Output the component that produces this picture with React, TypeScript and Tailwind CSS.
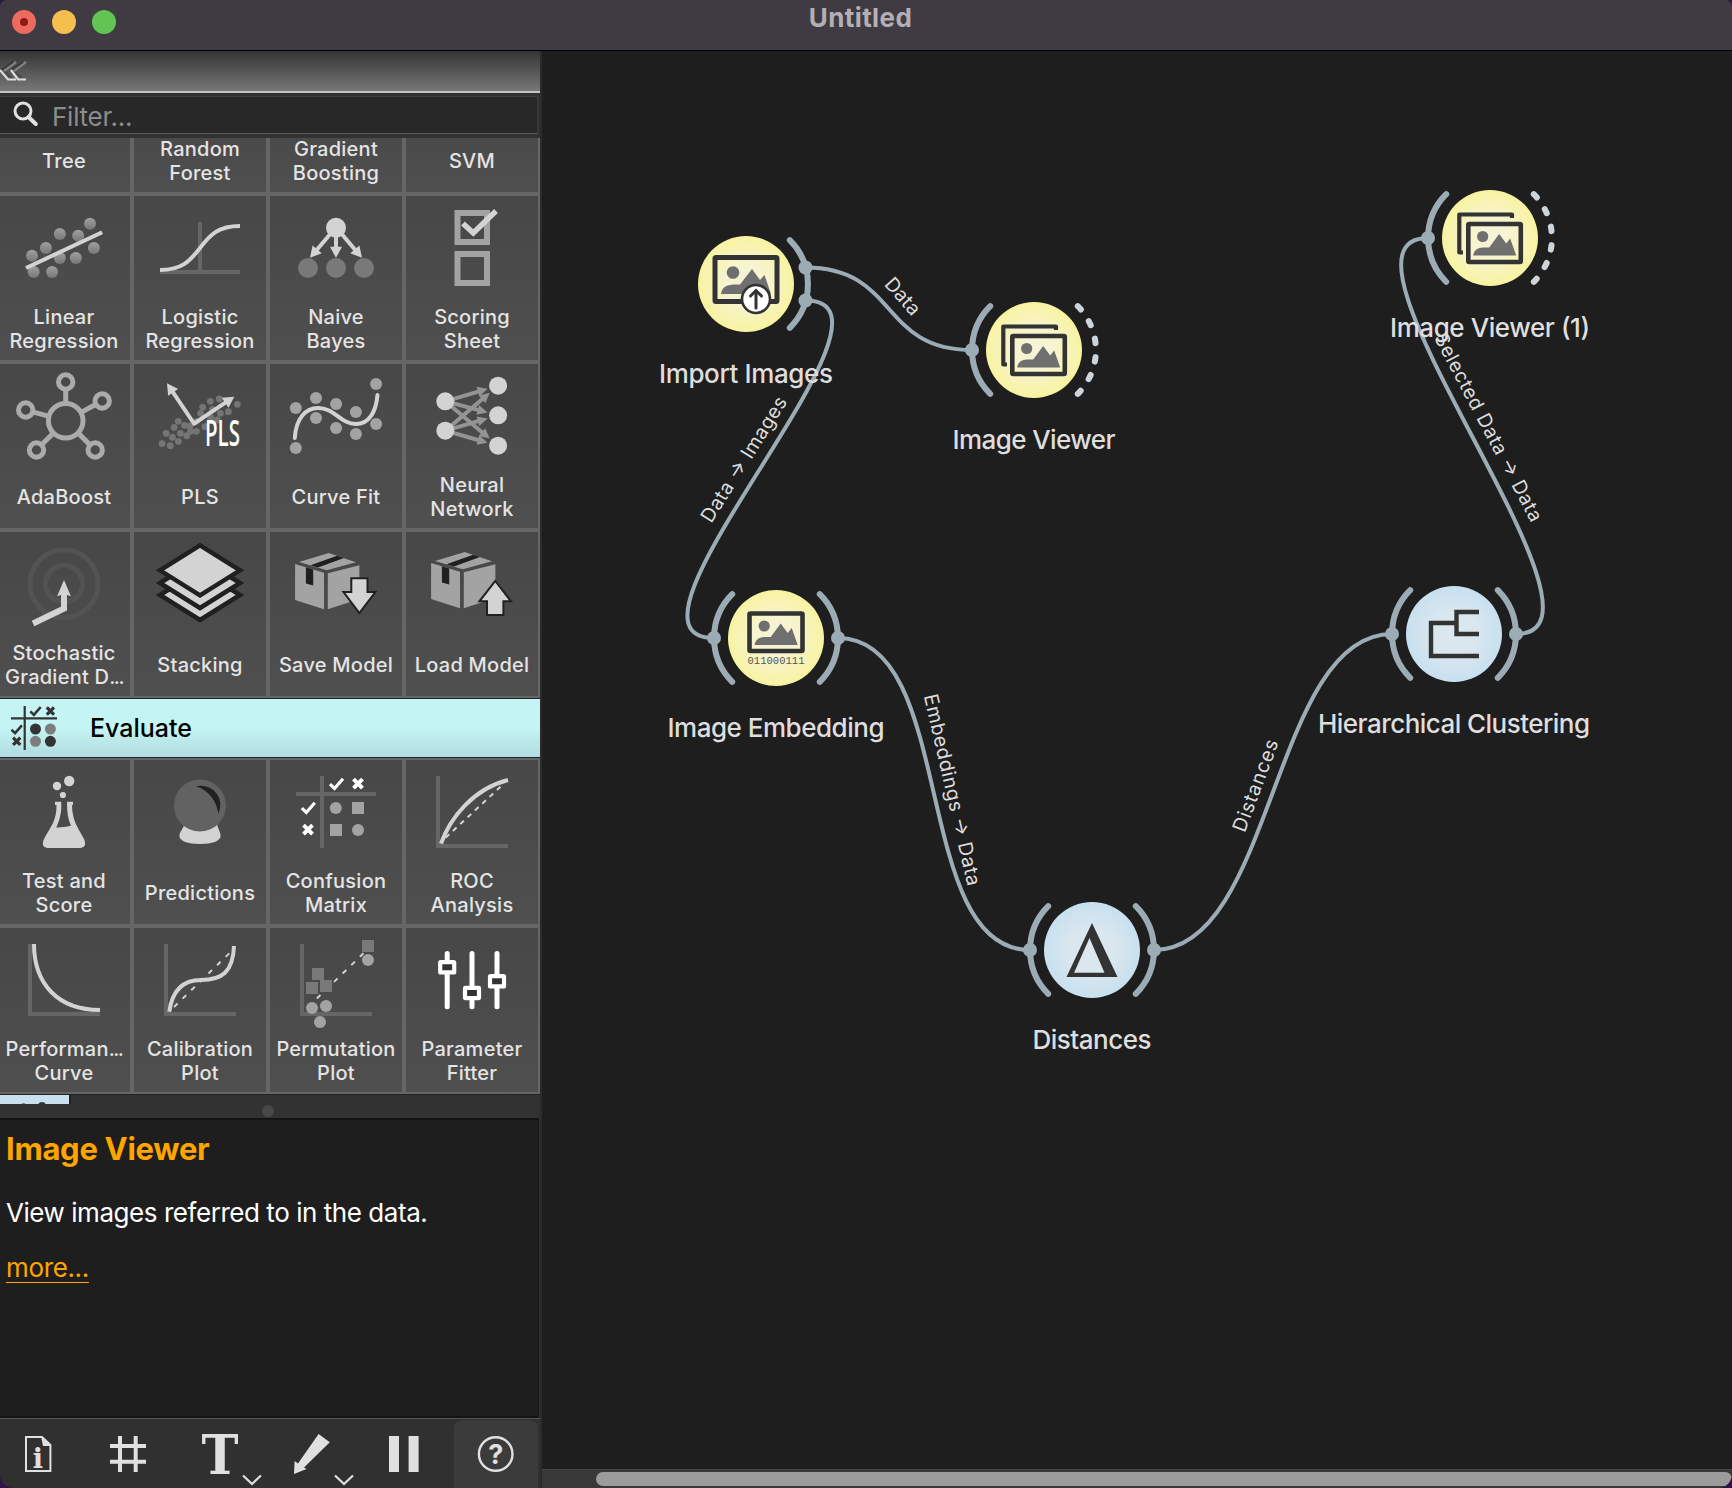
import React from "react";

const LIGHT = "#d3d3d3";
const MID = "#a3a3a3";
const AXIS = "#666666";
const WIRE = "#9cacb5";

type Pt = [number, number];

function Arrow({ from, to, color = LIGHT, width = 4, head = 11, half = 6 }: { from: Pt; to: Pt; color?: string; width?: number; head?: number; half?: number }) {
  const dx = to[0] - from[0];
  const dy = to[1] - from[1];
  const len = Math.hypot(dx, dy);
  const ux = dx / len;
  const uy = dy / len;
  const bx = to[0] - ux * head;
  const by = to[1] - uy * head;
  return (
    <g>
      <line x1={from[0]} y1={from[1]} x2={bx + ux * 2} y2={by + uy * 2} stroke={color} strokeWidth={width} />
      <polygon points={`${to[0]},${to[1]} ${bx - uy * half},${by + ux * half} ${bx + uy * half},${by - ux * half}`} fill={color} />
    </g>
  );
}

function Dots({ pts, r, fill }: { pts: Pt[]; r: number; fill: string }) {
  return (
    <g fill={fill}>
      {pts.map(([x, y], i) => (
        <circle key={i} cx={x} cy={y} r={r} />
      ))}
    </g>
  );
}

function Check({ x, y, s = 1, color = "#fff" }: { x: number; y: number; s?: number; color?: string }) {
  return <path transform={`translate(${x} ${y}) scale(${s})`} d="M-6.5 0.5 L-2 4.8 L6.5 -5" fill="none" stroke={color} strokeWidth="3.2" />;
}

function Cross({ x, y, s = 1, color = "#fff" }: { x: number; y: number; s?: number; color?: string }) {
  return <path transform={`translate(${x} ${y}) scale(${s})`} d="M-4.5 -4.5 L4.5 4.5 M4.5 -4.5 L-4.5 4.5" fill="none" stroke={color} strokeWidth="4" />;
}

const Axes = () => <path d="M30 18 V88 H100" fill="none" stroke={AXIS} strokeWidth="4" />;

const LinearIcon = () => (
  <g>
    <defs>
      <linearGradient id="ball" x1="0" y1="0" x2="0" y2="1">
        <stop offset="0" stopColor="#a0a0a0" />
        <stop offset="1" stopColor="#777" />
      </linearGradient>
    </defs>
    <Dots r={6} fill="url(#ball)" pts={[[90, 29.7], [59.8, 40], [78.2, 41.7], [45.9, 54], [93.9, 54], [32, 61.7], [59.8, 64], [75.8, 64], [33.7, 78], [52.1, 78]]} />
    <line x1="26" y1="74" x2="102.2" y2="38.3" stroke={LIGHT} strokeWidth="4" />
  </g>
);

const LogisticIcon = () => (
  <g fill="none">
    <path d="M64 28 V78 M24 78 H104" stroke={AXIS} strokeWidth="4" />
    <path d="M24 76 C46 76 54 67 64 54 S82 32 104 32" stroke={LIGHT} strokeWidth="4" />
  </g>
);

const BayesIcon = () => (
  <g>
    <Arrow from={[60, 38]} to={[38, 63.8]} />
    <Arrow from={[64, 38]} to={[64, 63.8]} />
    <Arrow from={[68, 38]} to={[90, 63.8]} />
    <circle cx="64" cy="33.8" r="10" fill={LIGHT} />
    <Dots r={10} fill="#797979" pts={[[36, 74], [64, 74], [92, 74]]} />
  </g>
);

const ScoringIcon = () => (
  <g fill="none">
    <rect x="49.5" y="19" width="29.5" height="29" stroke={MID} strokeWidth="6" />
    <rect x="49.5" y="60" width="29.5" height="29" stroke={MID} strokeWidth="6" />
    <path d="M55 29.5 L65.3 39 L88 17" stroke={LIGHT} strokeWidth="5.5" />
  </g>
);

const AdaIcon = () => (
  <g fill="none" stroke="#ababab" strokeWidth="5">
    <circle cx="65.7" cy="58.7" r="17.3" />
    {([[65.7, 20], [102.2, 39], [25.7, 48], [36.5, 88], [95.2, 88]] as Pt[]).map(([x, y], i) => {
      const d = Math.hypot(x - 65.7, y - 58.7);
      const ux = (x - 65.7) / d;
      const uy = (y - 58.7) / d;
      return (
        <g key={i}>
          <circle cx={x} cy={y} r="7.2" />
          <line x1={65.7 + ux * 18} y1={58.7 + uy * 18} x2={x - ux * 8} y2={y - uy * 8} />
        </g>
      );
    })}
  </g>
);

const PlsIcon = () => (
  <g>
    <Dots
      r={3.4}
      fill="#757575"
      pts={[[26, 81.7], [34.3, 83.7], [30.2, 71.3], [36.4, 75.3], [42.3, 79.3], [38.1, 65.3], [42.3, 59.3], [44.4, 71.3], [48.6, 63.3], [50.7, 73.7], [54.5, 69.3], [60.4, 69.3], [64.6, 51.3], [66.7, 45.3], [74.3, 39.3], [83.3, 37], [76.4, 47.3], [84.4, 51.3], [92.4, 49.7], [101.4, 42.3], [74.6, 55.3], [81.3, 58], [69, 64.7], [60.4, 59.3], [54, 64]]}
    />
    <Arrow from={[59, 63]} to={[31, 21.3]} />
    <Arrow from={[57.5, 62]} to={[98.3, 34.7]} />
    <text x="69" y="84" fontSize="36" textLength="35" lengthAdjust="spacingAndGlyphs" fill="#fff" className="font-['Open_Sans'] font-semibold">
      PLS
    </text>
  </g>
);

const CurveIcon = () => (
  <g>
    <Dots r={6} fill={MID} pts={[[23.8, 46], [44, 36], [64.1, 42], [44, 56], [83.9, 50], [64.1, 66], [83.9, 72], [104.1, 62], [104.1, 22], [23.8, 86]]} />
    <path d="M22.8 76 C24 56 34 46 46 46 C63 46 68 62 84 62 C97 62 104 50 105.5 33" fill="none" stroke={LIGHT} strokeWidth="4" strokeLinecap="round" />
  </g>
);

const NeuralIcon = () => {
  const left: Pt[] = [[37.3, 39.3], [37.3, 68.7]];
  const right: Pt[] = [[90.1, 23.7], [90.1, 53.3], [90.1, 83.7]];
  return (
    <g>
      {left.map((a) =>
        right.map((b) => {
          const d = Math.hypot(b[0] - a[0], b[1] - a[1]);
          const to: Pt = [b[0] - ((b[0] - a[0]) / d) * 11, b[1] - ((b[1] - a[1]) / d) * 11];
          return <Arrow key={`${a[1]}-${b[1]}`} from={a} to={to} color="#949494" width={4} head={10} half={5} />;
        })
      )}
      <Dots r={9} fill={LIGHT} pts={[...left, ...right]} />
    </g>
  );
};

const SgdIcon = () => (
  <g fill="none">
    <circle cx="64" cy="53.7" r="34" stroke="#535353" strokeWidth="5" />
    <circle cx="64" cy="53.7" r="18.5" stroke="#535353" strokeWidth="5" />
    <path d="M33 93.5 L64 78.5 V62" stroke={LIGHT} strokeWidth="6" />
    <polygon points="64,50 71,66.5 64,63.5 57,66.5" fill={LIGHT} />
  </g>
);

const StackIcon = () => (
  <g fill={LIGHT} stroke="#202020" strokeWidth="4.5">
    {[65, 53, 40.3].map((cy) => (
      <polygon key={cy} points={`64,${cy - 25} 104,${cy} 64,${cy + 25} 24,${cy}`} />
    ))}
  </g>
);

const Box = () => (
  <g fill={MID}>
    <polygon points="27,32 56.8,23 84,32.3 54.8,40.3" />
    <polygon points="23.1,34 52,42.7 52,79.3 23.1,70" />
    <polygon points="55.8,43.3 87.4,35.3 87.4,69 55.8,79.3" />
    <polygon points="38.5,35.2 65.2,25.7 72,28 46,37.6" fill="#202020" />
    <polygon points="33.9,37.3 41.2,39.5 41.2,55.5 33.9,53.5" fill="#202020" />
  </g>
);

const SaveIcon = () => (
  <g>
    <Box />
    <polygon points="79.3,48.3 95.5,48.3 95.5,62 103.3,62 87.4,83 71.5,62 79.3,62" fill={LIGHT} stroke="#202020" strokeWidth="2" />
  </g>
);

const LoadIcon = () => (
  <g>
    <g transform="translate(0 -1)">
      <Box />
    </g>
    <polygon points="87.3,51 103,71.3 95.4,71.3 95.4,85 79,85 79,71.3 71.4,71.3" fill={LIGHT} stroke="#202020" strokeWidth="2" />
  </g>
);

const FlaskIcon = () => (
  <g fill={LIGHT}>
    <circle cx="69.2" cy="23" r="5.2" />
    <circle cx="57" cy="28" r="4.2" />
    <circle cx="62.9" cy="37" r="3.1" />
    <path d="M55 43.7 H61.2 C61.8 54 60 61 56.3 69.7 C62 69 66 69 71 67.7 C68 61 67 54 67 43.7 H73 V47 H72 C72 62 78 70 83.5 80 C87 86.5 84.5 90 80 90 H48 C43.5 90 41 86.5 44.5 80 C50 70 57 62 56.5 47 H55 Z" />
  </g>
);

const PredictIcon = () => (
  <g>
    <path d="M48.5 66 C47 71 43.4 74 43.4 78 C43.4 83 52 86 64 86 S84.6 83 84.6 78 C84.6 74 82 71 81 66 Z" fill={LIGHT} />
    <circle cx="63.9" cy="47.5" r="26" fill="#626262" />
    <path d="M60 28.3 C70 26 80 31 83.5 41 C85 47 84 52 82.3 55.7 C81 44 73 32 60 28.3 Z" fill="#202020" />
  </g>
);

const ConfusionIcon = () => (
  <g>
    <path d="M50 18 V90 M24 36 H104" stroke={AXIS} strokeWidth="4" />
    <Check x={64.5} y={25.7} />
    <Cross x={86} y={25.7} />
    <Check x={36.3} y={49.7} />
    <Cross x={36} y={71.7} />
    <g fill={MID}>
      <circle cx="63.8" cy="50" r="6" />
      <rect x="80" y="44" width="12" height="12" />
      <rect x="58" y="66" width="12" height="12" />
      <circle cx="86" cy="72" r="6" />
    </g>
  </g>
);

const RocIcon = () => (
  <g fill="none" stroke={LIGHT}>
    <Axes />
    <path d="M33 85.7 C42 60 65 31 100 22" strokeWidth="4" />
    <path d="M37.6 79.7 L93 28.3" strokeWidth="2" strokeDasharray="5 5" />
  </g>
);

const PerfIcon = () => (
  <g fill="none">
    <Axes />
    <path d="M34 18 C34 58 58 84 100 84" stroke={LIGHT} strokeWidth="4" />
  </g>
);

const CalibIcon = () => (
  <g fill="none" stroke={LIGHT}>
    <Axes />
    <path d="M33.3 85.7 C36 66 46 54 65 54 C86 54 97 46 98 20" strokeWidth="4" />
    <path d="M38 81 L96 24.7" strokeWidth="2" strokeDasharray="5 7" />
  </g>
);

const PermIcon = () => (
  <g>
    <Axes />
    <path d="M91.5 27.3 L41 76.3" stroke={LIGHT} strokeWidth="2" strokeDasharray="5 7" />
    <g fill="#797979">
      <rect x="90" y="14" width="12" height="12" />
      <rect x="40" y="42" width="12" height="12" />
      <rect x="34" y="56" width="12" height="12" />
      <rect x="48" y="54" width="12" height="12" />
    </g>
    <Dots r={6} fill={MID} pts={[[96, 34], [40, 82], [54, 80], [48, 96]]} />
  </g>
);

const ParamIcon = () => (
  <g>
    {([[39.2, 41.3], [64, 67], [89, 55.3]] as Pt[]).map(([x, y]) => (
      <g key={x}>
        <line x1={x} x2={x} y1="27.5" y2="80.7" stroke="#fff" strokeWidth="5" strokeLinecap="round" />
        <rect x={x - 7} y={y - 5.1} width="14" height="10.2" rx="0.5" fill="#333" stroke="#fff" strokeWidth="4.2" strokeLinejoin="round" />
      </g>
    ))}
  </g>
);

type Widget = { label: string[]; icon: () => React.ReactElement };

const MODEL: Widget[] = [
  { label: ["Linear", "Regression"], icon: LinearIcon },
  { label: ["Logistic", "Regression"], icon: LogisticIcon },
  { label: ["Naive", "Bayes"], icon: BayesIcon },
  { label: ["Scoring", "Sheet"], icon: ScoringIcon },
  { label: ["AdaBoost"], icon: AdaIcon },
  { label: ["PLS"], icon: PlsIcon },
  { label: ["Curve Fit"], icon: CurveIcon },
  { label: ["Neural", "Network"], icon: NeuralIcon },
  { label: ["Stochastic", "Gradient D..."], icon: SgdIcon },
  { label: ["Stacking"], icon: StackIcon },
  { label: ["Save Model"], icon: SaveIcon },
  { label: ["Load Model"], icon: LoadIcon },
];

const EVALUATE: Widget[] = [
  { label: ["Test and", "Score"], icon: FlaskIcon },
  { label: ["Predictions"], icon: PredictIcon },
  { label: ["Confusion", "Matrix"], icon: ConfusionIcon },
  { label: ["ROC", "Analysis"], icon: RocIcon },
  { label: ["Performan...", "Curve"], icon: PerfIcon },
  { label: ["Calibration", "Plot"], icon: CalibIcon },
  { label: ["Permutation", "Plot"], icon: PermIcon },
  { label: ["Parameter", "Fitter"], icon: ParamIcon },
];

function Label({ lines }: { lines: string[] }) {
  return (
    <div className="flex h-12 shrink-0 flex-col items-center justify-center text-[20px] leading-6 font-medium tracking-[0.25px] whitespace-nowrap text-[#e4e4e4]">
      {lines.map((l) =>
        l.endsWith("...") ? (
          <span key={l}>
            {l.slice(0, -3)}
            <span className="tracking-[-1.5px]">...</span>
          </span>
        ) : (
          <span key={l}>{l}</span>
        )
      )}
    </div>
  );
}

function Grid({ items }: { items: Widget[] }) {
  return (
    <div className="grid grid-cols-[132px_136px_136px_136px]">
      {items.map(({ label, icon: Icon }, i) => (
        <div
          key={i}
          className={`flex h-[168px] flex-col items-center border-2 border-[#666] bg-linear-to-b from-[#474747] to-[#4f4f4f] ${i % 4 === 0 ? "border-l-0 pr-0.5" : ""}`}
        >
          <svg className="h-[109px] w-32 shrink-0" viewBox="0 2 128 109">
            <Icon />
          </svg>
          <Label lines={label} />
        </div>
      ))}
    </div>
  );
}

function Sidebar() {
  return (
    <aside className="flex w-[542px] shrink-0 flex-col border-r-2 border-[#2b2b2b] bg-[#323232]">
      <div className="flex h-[42px] shrink-0 items-center border-b-2 border-[#c4c4c4] bg-linear-to-b from-[#353535] to-[#787878]">
        <svg className="h-5 w-7" viewBox="0 0 28 20" fill="none">
          <path d="M16 1 L4 10 M26 1 L14 10" stroke="#808080" strokeWidth="2.5" />
          <path d="M13 1 L1 9 M23 1 L11 9" stroke="#3a3a3a" strokeWidth="2" />
          <path d="M5 11 L12 17 M15 11 L22 17" stroke="#4a4a4a" strokeWidth="2" />
          <path d="M0 9 L8 18.5 H16 M11 9 L18 18.5 H26" stroke="#dcdcdc" strokeWidth="2.2" />
        </svg>
      </div>
      <div className="mt-[3px] flex h-[38px] w-[538px] shrink-0 items-center border border-l-0 border-t-[#404040] border-r-[#3a3a3a] border-b-[#5a5a5a] bg-[#282828]">
        <svg className="ml-3 h-7 w-7" viewBox="12 101 28 28" fill="none" stroke="#e0e0e0">
          <circle cx="23" cy="111" r="8" strokeWidth="3" />
          <path d="M28.5 117 L35.8 124" strokeWidth="4" strokeLinecap="round" />
        </svg>
        <span className="ml-3 pt-1 text-[26px] leading-8 tracking-[-0.25px] text-[#8c8c8c]">Filter...</span>
      </div>
      <div className="mt-1 flex h-[966px] shrink-0 flex-col overflow-hidden">
        <div className="grid h-14 shrink-0 grid-cols-[132px_136px_136px_136px]">
          {[["Tree"], ["Random", "Forest"], ["Gradient", "Boosting"], ["SVM"]].map((l, i) => (
            <div
              key={i}
              className={`h-14 border-2 border-t-0 border-[#666] bg-linear-to-b from-[#4a4a4a] to-[#4f4f4f] ${i === 0 ? "border-l-0 pr-0.5" : ""}`}
            >
              <div className="-mt-px">
                <Label lines={l} />
              </div>
            </div>
          ))}
        </div>
        <Grid items={MODEL} />
        <div className="flex h-[60px] shrink-0 items-center border-y border-[#222] bg-linear-to-b from-[#c5f4f4] from-50% to-[#b0dcdf]">
          <svg className="h-[58px] w-[90px]" viewBox="0 0 90 58">
            <path d="M24.7 7 V51 M11 19.3 H57" stroke="#333" strokeWidth="2.2" />
            <Check x={35.5} y={12} s={0.8} color="#333" />
            <Cross x={50.4} y={12} s={0.8} color="#333" />
            <Check x={16.7} y={30.3} s={0.8} color="#333" />
            <Cross x={16.7} y={42.3} s={0.8} color="#333" />
            <Dots r={5.5} fill="#333" pts={[[35.5, 30], [50.4, 42.3]]} />
            <Dots r={5.5} fill="#7d7d7d" pts={[[50.4, 30], [35.5, 42.3]]} />
          </svg>
          <span className="text-[25px] leading-8 font-medium text-black">Evaluate</span>
        </div>
        <Grid items={EVALUATE} />
        <div className="flex h-2.5 shrink-0 border-t border-[#222]">
          <svg className="h-[9px] w-[71px] border-r-2 border-[#222] bg-[#c9e1ee]" viewBox="0 0 69 9">
            <circle cx="42" cy="11" r="4" fill="#333" />
            <circle cx="23.5" cy="10.5" r="2.5" fill="#777" />
          </svg>
        </div>
      </div>
      <div className="flex h-3.5 shrink-0 justify-center pr-1">
        <div className="mt-[1px] size-3 rounded-full bg-[#484848]" />
      </div>
      <div className="flex h-[300px] w-[539px] shrink-0 flex-col items-start border-t-2 border-r border-b-2 border-[#141414] bg-[#1e1e1e] pl-1.5">
        <h1 className="mt-[9px] text-[31px] leading-10 font-bold tracking-[-0.3px] text-[#ffa500]">Image Viewer</h1>
        <p className="mt-7 text-[26px] leading-8 tracking-[-0.45px] text-white">View images referred to in the data.</p>
        <a className="mt-[25px] border-b border-[#ffa500] text-[26px] leading-[28px] tracking-[-0.35px] text-[#ffa500]">more...</a>
      </div>
      <div className="flex h-[70px] shrink-0 border-t border-[#555] bg-[#303030]">
        <svg className="h-[69px] w-[454px]" viewBox="0 1 454 69" fill="#e0e0e0">
          <path d="M26 19 H42 L50.4 27 V53 H26 Z" fill="none" stroke="#e0e0e0" strokeWidth="2" />
          <path d="M41 18 L51.4 28 H43 Z" />
          <text x="38" y="49.5" textAnchor="middle" fontSize="27" className="font-['DejaVu_Serif'] font-bold">
            i
          </text>
          <path d="M120 18 V54 M135.7 18 V54 M110 28 H146 M110 43.7 H146" stroke="#e0e0e0" strokeWidth="4" />
          <text x="220" y="56" textAnchor="middle" fontSize="55" textLength="37" lengthAdjust="spacingAndGlyphs" className="font-['DejaVu_Serif'] font-bold">
            T
          </text>
          <path d="M243 57.5 L252 66 L261 57.5 M335 57.5 L344 66 L353 57.5" fill="none" stroke="#e0e0e0" strokeWidth="2.2" />
          <polygon points="318.6,16 329.8,24.3 304,49.5 306.6,51 294,56 294.6,43 298,45.5" />
          <rect x="389" y="18" width="10" height="36" />
          <rect x="408.6" y="18" width="10" height="36" />
        </svg>
        <div className="mt-px flex h-[68px] w-[84px] rounded-t-lg bg-[#3b3b3b]">
          <svg className="h-[68px] w-[84px]" viewBox="454 2 84 68">
            <circle cx="495.7" cy="36" r="16.8" fill="none" stroke="#e0e0e0" strokeWidth="2.4" />
            <text x="495.7" y="45.5" textAnchor="middle" fontSize="27" fill="#e0e0e0" className="font-['Inter'] font-bold">
              ?
            </text>
          </svg>
        </div>
      </div>
    </aside>
  );
}

/* Workflow canvas, drawn in window coordinates. */

const LINKS: { a: Pt; b: Pt; text: string; len: number }[] = [
  { a: [805.5, 267.5], b: [972, 350], text: "Data", len: 43 },
  { a: [805.5, 300.5], b: [714, 638], text: "Data → Images", len: 144 },
  { a: [838, 638], b: [1030, 950], text: "Embeddings → Data", len: 196 },
  { a: [1154, 950], b: [1392, 634], text: "Distances", len: 97 },
  { a: [1516, 634], b: [1428, 238], text: "Selected Data → Data", len: 210 },
];

function Link({ a, b, text, len }: { a: Pt; b: Pt; text: string; len: number }) {
  const off = Math.min(Math.hypot(a[0] - b[0], a[1] - b[1]) / 2, 120);
  const mx = (a[0] + b[0]) / 2;
  const my = (a[1] + b[1]) / 2;
  let dx = 2 * (b[0] - a[0]) - 2 * off;
  let dy = 2 * (b[1] - a[1]);
  if (dx < 0) {
    dx = -dx;
    dy = -dy;
  }
  const angle = (Math.atan2(dy, dx) * 180) / Math.PI;
  return (
    <g>
      <path d={`M${a[0]} ${a[1]} C${a[0] + off} ${a[1]} ${b[0] - off} ${b[1]} ${b[0]} ${b[1]}`} fill="none" stroke={WIRE} strokeWidth="4" />
      <text transform={`translate(${mx} ${my}) rotate(${angle})`} y="-12" textAnchor="middle" fontSize="19.5" textLength={len} fill="#dcdcdc">
        {text}
      </text>
    </g>
  );
}

const Photo = () => (
  <g>
    <circle cx="-7.5" cy="-8.5" r="5.6" />
    <path d="M-17 10.5 C-16 3 -10 2 -1 2.5 L9 -11 L16 -1.5 L20 -6.5 L26 10.5 Z" />
  </g>
);

const ImportGlyph = () => (
  <g>
    <rect x="-31" y="-26.5" width="62" height="44" rx="1" fill="none" stroke="#333" strokeWidth="5" />
    <g fill="#6f6f6f">
      <circle cx="-13" cy="-11.5" r="6.3" />
      <path d="M-25 10 C-24 2 -18 0 -6 0.5 L6 -15 L14 -4 L18.5 -9 L25 10 Z" />
    </g>
    <circle cx="10" cy="15" r="14" fill="#fff" stroke="#333" strokeWidth="2.6" />
    <path d="M10 24 V7 M4.5 12 L10 6.5 L15.5 12" fill="none" stroke="#333" strokeWidth="3" strokeLinecap="round" />
  </g>
);

const ViewerGlyph = () => (
  <g>
    <path d="M-27 14.5 H-30.7 V-23.5 H22 V-20" fill="none" stroke="#333" strokeWidth="4.2" strokeLinejoin="round" />
    <rect x="-21.7" y="-14" width="52.5" height="38" rx="1" fill="none" stroke="#333" strokeWidth="4.6" />
    <g fill="#6f6f6f" transform="translate(0.2 7)">
      <Photo />
    </g>
  </g>
);

const EmbedGlyph = () => (
  <g>
    <rect x="-26.5" y="-24.5" width="53" height="37.5" rx="1" fill="none" stroke="#333" strokeWidth="4.6" />
    <g fill="#6f6f6f" transform="translate(-4.3 -3.5)">
      <Photo />
    </g>
    <text x="0" y="26" textAnchor="middle" fontSize="11.5" textLength="57" lengthAdjust="spacingAndGlyphs" fill="#555" className="font-['Liberation_Mono']">
      011000111
    </text>
  </g>
);

const ClusterGlyph = () => (
  <path d="M25 -22 H2.5 V0 H25 M2.5 -11 H-23 V22 H25" fill="none" stroke="#333" strokeWidth="4.4" />
);

const DeltaGlyph = () => <path fillRule="evenodd" fill="#333" d="M0 -27 L25.5 27 H-25.5 Z M-2.5 -12 L-18 22.7 H12.5 Z" />;

type Port = "solid" | "dashed" | "none";
const NODES: { x: number; y: number; label: string; w: number; tone: string; left: Port; right: Port; ports: Pt[]; glyph: () => React.ReactElement }[] = [
  { x: 746, y: 284, label: "Import Images", w: 174, tone: "url(#yellow)", left: "none", right: "solid", ports: [[59.5, -16.5], [59.5, 16.5]], glyph: ImportGlyph },
  { x: 1034, y: 350, label: "Image Viewer", w: 163, tone: "url(#yellow)", left: "solid", right: "dashed", ports: [[-62, 0]], glyph: ViewerGlyph },
  { x: 776, y: 638, label: "Image Embedding", w: 217, tone: "url(#yellow)", left: "solid", right: "solid", ports: [[-62, 0], [62, 0]], glyph: EmbedGlyph },
  { x: 1490, y: 238, label: "Image Viewer (1)", w: 200, tone: "url(#yellow)", left: "solid", right: "dashed", ports: [[-62, 0]], glyph: ViewerGlyph },
  { x: 1454, y: 634, label: "Hierarchical Clustering", w: 272, tone: "url(#blue)", left: "solid", right: "solid", ports: [[-62, 0], [62, 0]], glyph: ClusterGlyph },
  { x: 1092, y: 950, label: "Distances", w: 119, tone: "url(#blue)", left: "solid", right: "solid", ports: [[-62, 0], [62, 0]], glyph: DeltaGlyph },
];

function Canvas() {
  return (
    <main className="flex min-w-0 flex-1 flex-col bg-[#1e1e1e]">
      <svg className="h-[1418px] w-[1190px] shrink-0" viewBox="542 51 1190 1418">
        <defs>
          <radialGradient id="yellow">
            <stop offset="0" stopColor="#f6f3d8" />
            <stop offset="0.45" stopColor="#f7f4cf" />
            <stop offset="1" stopColor="#f8f3a0" />
          </radialGradient>
          <radialGradient id="blue">
            <stop offset="0" stopColor="#dde8ef" />
            <stop offset="0.45" stopColor="#dae7ef" />
            <stop offset="1" stopColor="#c8e0ef" />
          </radialGradient>
        </defs>
        {LINKS.map((l) => (
          <Link key={l.text} {...l} />
        ))}
        {NODES.map(({ x, y, label, w, tone, left, right, ports, glyph: Glyph }) => (
          <g key={label} transform={`translate(${x} ${y})`}>
            {left === "solid" && <path d="M-43.8 -43.8 A62 62 0 0 0 -43.8 43.8" fill="none" stroke={WIRE} strokeWidth="6" strokeLinecap="round" />}
            {right === "solid" && <path d="M43.8 -43.8 A62 62 0 0 1 43.8 43.8" fill="none" stroke={WIRE} strokeWidth="6" strokeLinecap="round" />}
            {right === "dashed" && (
              <path d="M43.8 -43.8 A62 62 0 0 1 43.8 43.8" fill="none" stroke="#cdd5da" strokeWidth="6" strokeLinecap="round" strokeDasharray="4.6 13.95" />
            )}
            <Dots r={7} fill={WIRE} pts={ports} />
            <circle r="48" fill={tone} />
            <Glyph />
            <text y="98.7" textAnchor="middle" fontSize="26" textLength={w} fill="#dedede" className="font-[450]">
              {label}
            </text>
          </g>
        ))}
      </svg>
      <div className="flex h-[19px] items-start border-t border-[#474747] bg-[#383838] pt-0.5 pl-[54px]">
        <div className="h-[14px] w-full rounded-full bg-[#9b9b9b]" />
      </div>
    </main>
  );
}

export default function App() {
  return (
    <div className="h-[1488px] w-[1732px] overflow-hidden bg-[#2c1350] font-['Inter',sans-serif]">
      <div className="flex h-full w-full flex-col overflow-hidden rounded-t-md rounded-b-[14px] bg-[#1e1e1e]">
        <header className="grid h-[51px] shrink-0 grid-cols-[1fr_auto_1fr] border-b border-black bg-[#403a42]">
          <div className="flex gap-4 pt-2.5 pl-3">
            <span className="flex size-6 items-center justify-center rounded-full bg-[#ed6a5e]">
              <span className="size-2 rounded-full bg-[#8c1a10]" />
            </span>
            <span className="size-6 rounded-full bg-[#f5bf4f]" />
            <span className="size-6 rounded-full bg-[#61c554]" />
          </div>
          <span className="mr-[11px] text-[26px] leading-9 font-bold tracking-[0.4px] text-[#b3afb4]">Untitled</span>
        </header>
        <div className="flex min-h-0 flex-1">
          <Sidebar />
          <Canvas />
        </div>
      </div>
    </div>
  );
}
